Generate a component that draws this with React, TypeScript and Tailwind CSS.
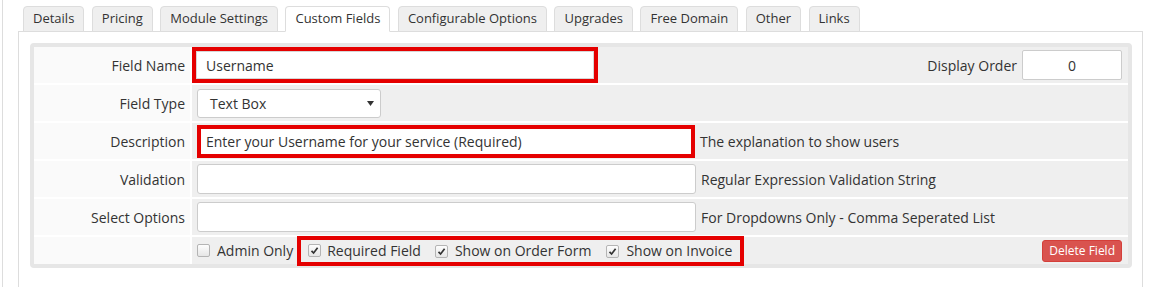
import React from "react";

const tabs = [
  "Details",
  "Pricing",
  "Module Settings",
  "Custom Fields",
  "Configurable Options",
  "Upgrades",
  "Free Domain",
  "Other",
  "Links",
];

function Check({ checked }: { checked?: boolean }) {
  return (
    <span className="inline-flex h-[13px] w-[13px] shrink-0 items-center justify-center rounded-[2px] border border-[#b4b4b4] bg-gradient-to-b from-[#fdfdfd] to-[#e6e6e6]">
      {checked && (
        <svg width="9" height="9" viewBox="0 0 9 9">
          <path d="M1.5 4.8 L3.6 7 L7.6 1.8" fill="none" stroke="#333" strokeWidth="1.7" />
        </svg>
      )}
    </span>
  );
}

function Row({
  label,
  h = "h-[36px]",
  children,
}: {
  label: string;
  h?: string;
  children: React.ReactNode;
}) {
  return (
    <div className={`flex gap-[2px] ${h}`}>
      <div className="flex w-[156px] shrink-0 items-center justify-end bg-[#fafafa] pr-[5px]">
        {label}
      </div>
      <div className="flex min-w-0 flex-1 items-center bg-[#efefef] pl-[5px] pr-[6px]">
        {children}
      </div>
    </div>
  );
}

function Help({ children }: { children: React.ReactNode }) {
  return <span className="ml-[5px] whitespace-nowrap">{children}</span>;
}

export default function App() {
  return (
    <div className="h-[287px] w-[1149px] overflow-hidden bg-white font-['Open_Sans',sans-serif] text-[14px] text-[#333]">
      <div className="ml-[2px] min-h-[300px] border-l border-[#ddd] pl-[15px]">
        {/* tab strip */}
        <div className="flex gap-[7.5px] pl-[5px] pt-[6px] text-[13px]">
          {tabs.map((t) => {
            const active = t === "Custom Fields";
            return (
              <div
                key={t}
                className={`relative -mb-px flex h-[26px] items-center rounded-t-[4px] border border-[#ddd] px-[9px] ${
                  active ? "z-10 border-b-white bg-white" : "bg-[#efefef]"
                }`}
              >
                {t}
              </div>
            );
          })}
        </div>

        {/* tab content */}
        <div className="w-[1125px] border border-[#ddd] pb-[30px] pl-[11px] pr-[10px] pt-[11px]">
          <div className="flex flex-col gap-[2px] rounded-[4px] border-4 border-[#e6e6e6]">
            <Row label="Field Name">
              <div className="-ml-[5px] h-[36px] w-[406px] border-4 border-[#e50000]">
                <div className="flex h-full items-center border border-[#d6d6d6] bg-white pl-[9px]">
                  Username
                </div>
              </div>
              <div className="ml-auto flex items-center">
                <span className="mr-[5px]">Display Order</span>
                <div className="flex h-[30px] w-[100px] items-center justify-center rounded-[2px] border border-[#ccc] bg-white">
                  0
                </div>
              </div>
            </Row>

            <Row label="Field Type">
              <div className="flex h-[29px] w-[184px] items-center justify-between rounded-[3px] border border-[#ccc] bg-white pl-[12px] pr-[6px]">
                <span>Text Box</span>
                <svg width="7" height="5" viewBox="0 0 7 5">
                  <path d="M0 0 H7 L3.5 5 Z" fill="#333" />
                </svg>
              </div>
            </Row>

            <Row label="Description">
              <div className="flex h-[33px] w-[498px] items-center border-4 border-[#e50000] bg-white pl-[5px]">
                Enter your Username for your service (Required)
              </div>
              <Help>The explanation to show users</Help>
            </Row>

            <Row label="Validation">
              <div className="h-[30px] w-[499px] rounded-[3px] border border-[#ccc] bg-white" />
              <Help>Regular Expression Validation String</Help>
            </Row>

            <Row label="Select Options">
              <div className="h-[30px] w-[499px] rounded-[3px] border border-[#ccc] bg-white" />
              <Help>For Dropdowns Only - Comma Seperated List</Help>
            </Row>

            <Row label="" h="h-[27px]">
              <Check />
              <span className="ml-[7px]">Admin Only</span>
              <div className="ml-[4px] flex h-[30px] shrink-0 items-center border-4 border-[#e50000] pl-[7px] pr-[8px]">
                <Check checked />
                <span className="ml-[6px]">Required Field</span>
                <span className="ml-[14px]">
                  <Check checked />
                </span>
                <span className="ml-[7px]">Show on Order Form</span>
                <span className="ml-[15px]">
                  <Check checked />
                </span>
                <span className="ml-[7px]">Show on Invoice</span>
              </div>
              <button className="ml-auto flex h-[22px] items-center rounded-[3px] border border-[#d43f3a] bg-[#d9534f] px-[6px] text-[12px] text-white">
                Delete Field
              </button>
            </Row>
          </div>
        </div>
      </div>
    </div>
  );
}
